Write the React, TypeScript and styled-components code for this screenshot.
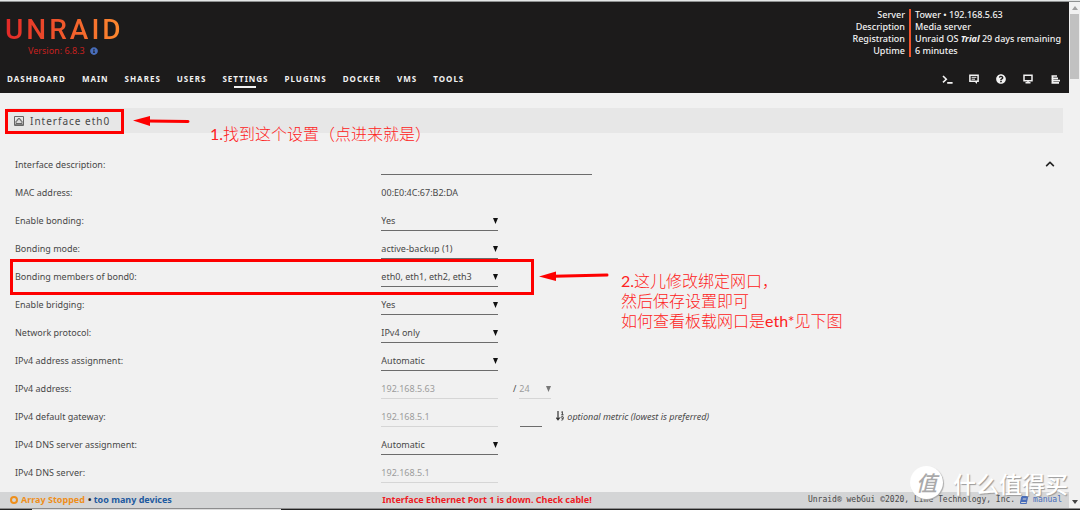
import React from 'react';
import styled, { createGlobalStyle, css } from 'styled-components';
import { FaChevronUp, FaInfoCircle, FaQuestionCircle, FaBook } from 'react-icons/fa';

const GlobalStyle = createGlobalStyle`
  * { box-sizing: border-box; }
  body {
    margin: 0;
    background: #f1f1f1;
    color: #484848;
    font-family: "Noto Sans", "Noto Sans CJK SC", sans-serif;
    font-size: 9px;
  }
  button, input, select { font: inherit; color: inherit; }
`;

const Screen = styled.div`
  position: relative;
  display: flex;
  flex-direction: column;
  height: 100vh;
  overflow: hidden;
  border-top: 1px solid #e4e6e6;
`;

const Viewport = styled.div`
  display: flex;
  flex: 1;
  min-height: 0;
  border-top: 1px solid #8f9191;
`;

const Page = styled.div`
  display: flex;
  flex: 1;
  flex-direction: column;
  min-width: 0;
`;

const Header = styled.header`
  display: flex;
  flex-direction: column;
  justify-content: space-between;
  height: 91px;
  padding: 7px 8px 4px 7px;
  background: #1c1b1b;
  color: #f2f2f2;
`;

const HeaderTop = styled.div`
  display: flex;
  justify-content: space-between;
`;

const Brand = styled.div`
  display: flex;
  flex-direction: column;
  padding-top: 7px;
`;

const Logo = styled.a`
  margin-left: -2px;
  font-family: Roboto, sans-serif;
  font-size: 28px;
  line-height: 28px;
  font-weight: 500;
  letter-spacing: 3px;
  text-decoration: none;
  color: transparent;
  background: linear-gradient(90deg, #e22828, #ff8c2f);
  background-clip: text;
  -webkit-background-clip: text;
`;

const Version = styled.div`
  display: flex;
  align-items: center;
  gap: 5px;
  margin-top: 1px;
  padding-left: 21px;
  line-height: 12px;
  color: #c4211f;
  svg { color: #486dba; }
`;

const ServerInfo = styled.dl`
  display: grid;
  grid-template-columns: auto auto;
  margin: 0;
  font-weight: 500;
  line-height: 12px;
  height: 48px;
`;

const InfoName = styled.dt`
  padding-right: 4px;
  text-align: right;
  border-right: 2px solid #f0522b;
`;

const InfoValue = styled.dd`
  margin: 0;
  padding-left: 4px;
`;

const NavBar = styled.div`
  display: flex;
  align-items: flex-start;
  justify-content: space-between;
  height: 16px;
`;

const Nav = styled.nav`
  display: flex;
  gap: 16px;
`;

const NavLink = styled.a<{ $active?: boolean }>`
  position: relative;
  font-size: 8px;
  line-height: 12px;
  font-weight: 700;
  letter-spacing: 1px;
  color: #f2f2f2;
  text-decoration: none;
  ${p => p.$active && css`
    &::after {
      content: "";
      position: absolute;
      left: calc(50% - 11px);
      bottom: -3px;
      width: 22px;
      height: 2px;
      background: #f2f2f2;
    }
  `}
`;

const Tools = styled.div`
  display: flex;
  gap: 15px;
`;

const IconButton = styled.button`
  display: flex;
  align-items: center;
  justify-content: center;
  width: 12px;
  height: 12px;
  padding: 0;
  border: 0;
  background: none;
`;

const Content = styled.main`
  flex: 1;
  min-height: 0;
  padding: 15px 6px 0 7px;
`;

const Title = styled.h1`
  display: flex;
  align-items: center;
  gap: 6px;
  height: 25px;
  margin: 0 0 17px;
  padding: 0 7px;
  background: #e7e7e7;
  font-size: 10px;
  font-weight: 400;
  letter-spacing: 1px;
`;

const Form = styled.form`
  padding: 0 7px 0 8px;
`;

const Row = styled.div`
  display: grid;
  grid-template-columns: 35% 1fr;
  align-items: center;
  height: 28px;
`;

const Field = styled.div`
  display: flex;
  align-items: center;
  padding-left: 2px;
`;

const controlStyle = css<{ $width: number }>`
  width: ${p => p.$width}px;
  height: 22px;
  padding: 2px 0 0;
  border: 0;
  border-bottom: 1px solid #6c6c6c;
  border-radius: 0;
  background: none;
  outline: 0;
  &:disabled {
    border-color: #d6d6d6;
    color: #9c9c9c;
    opacity: 1;
  }
`;

const TextBox = styled.input<{ $width: number }>`${controlStyle}`;

const SelectBox = styled.select<{ $width: number }>`
  ${controlStyle}
  appearance: none;
`;

const SelectWrap = styled.span<{ $muted?: boolean }>`
  position: relative;
  display: flex;
  > svg {
    position: absolute;
    right: 0;
    top: 9px;
    pointer-events: none;
    fill: ${p => (p.$muted ? '#777' : '#111')};
  }
`;

const Slash = styled.span`
  width: 21px;
  padding-right: 3px;
  text-align: right;
`;

const Metric = styled.span`
  display: flex;
  align-items: center;
  padding-left: 22px;
`;

const Hint = styled.em`
  display: flex;
  align-items: center;
  gap: 3px;
  padding-left: 14px;
`;

const CollapseButton = styled(IconButton)`
  margin-left: auto;
  color: #222;
`;

const Footer = styled.footer`
  display: grid;
  grid-template-columns: 35% 1fr auto;
  align-items: center;
  height: 16px;
  padding: 0 7px 0 10px;
  background: #d4d5d6;
  font-weight: 700;
  line-height: 16px;
`;

const Status = styled.div`
  display: flex;
  align-items: center;
  gap: 3px;
  color: #ee8f1c;
`;

const StatusNote = styled.span`
  color: #1d5aa0;
  &::before { content: "• "; color: #222; }
`;

const Alert = styled.div`
  padding-left: 4px;
  color: #ee1c25;
`;

const Copyright = styled.div`
  display: flex;
  align-items: center;
  gap: 5px;
  font-family: "DejaVu Sans Mono", monospace;
  font-size: 8px;
  font-weight: 400;
`;

const ManualLink = styled.a`
  display: flex;
  align-items: center;
  gap: 5px;
  color: #486dba;
  text-decoration: none;
  svg { transform: skewX(-12deg); }
`;

const ScrollTrack = styled.div`
  display: flex;
  flex-direction: column;
  align-items: center;
  justify-content: space-between;
  width: 11px;
  padding: 4px 1px;
  background: #f1f1f1;
`;

const ScrollTop = styled.div`
  display: flex;
  flex-direction: column;
  align-items: center;
  gap: 4px;
  width: 100%;
`;

const ScrollThumb = styled.div`
  width: 100%;
  height: 65px;
  background: #c1c1c1;
`;

const DesktopEdge = styled.div`
  height: 2px;
  border-top: 1px solid #8d8d8e;
  background: linear-gradient(90deg, #222 3%, #ddd 3%, #ddd 26%, #222 26%);
`;

const Mark = styled.div<{ $x: number; $y: number; $w: number; $h: number }>`
  position: absolute;
  left: ${p => p.$x}px;
  top: ${p => p.$y}px;
  width: ${p => p.$w}px;
  height: ${p => p.$h}px;
  border: 3px solid #fe0000;
  pointer-events: none;
`;

const Arrow = styled.svg<{ $x: number; $y: number }>`
  position: absolute;
  left: ${p => p.$x}px;
  top: ${p => p.$y}px;
  pointer-events: none;
`;

const Note = styled.div<{ $x: number; $y: number }>`
  position: absolute;
  left: ${p => p.$x}px;
  top: ${p => p.$y}px;
  font-family: Lato, "Noto Sans CJK SC", sans-serif;
  font-size: 16px;
  line-height: 20px;
  font-weight: 300;
  white-space: nowrap;
  color: #fe2222;
  pointer-events: none;
`;

const Latin = styled.span`
  font-weight: 400;
`;

const Watermark = styled.div`
  position: absolute;
  right: 12px;
  bottom: 11px;
  display: flex;
  align-items: center;
  gap: 10px;
  font-family: "Noto Sans CJK SC", sans-serif;
  font-size: 23px;
  line-height: 32px;
  font-weight: 500;
  color: #fff;
  text-shadow: 1px 1px 1px #999;
  pointer-events: none;
`;

const WatermarkBadge = styled.span`
  width: 33px;
  height: 33px;
  border-radius: 50%;
  background: #fff;
  box-shadow: 1px 1px 1px #aaa;
  font-size: 21px;
  font-style: italic;
  text-align: center;
  text-shadow: none;
  color: #a9a9aa;
`;

const Caret = () => (
  <svg width="5" height="6" viewBox="0 0 5 6" aria-hidden="true">
    <path d="M0 0H5L2.5 6Z" />
  </svg>
);

const TerminalIcon = () => (
  <svg width="11" height="9" viewBox="0 0 11 9" fill="none" stroke="currentColor" strokeWidth="1.6">
    <path d="M1 1L4.3 4.2L1 7.4M5.2 7.9H10.6" />
  </svg>
);

const FeedbackIcon = () => (
  <svg width="10" height="10" viewBox="0 0 10 10" fill="none" stroke="currentColor">
    <path strokeWidth="1.5" d="M.9 1.2H9.1V7.3H.9Z" />
    <path d="M2.6 3.3H7.4M2.6 5.2H6" />
    <path fill="currentColor" stroke="none" d="M5 7H8V10Z" />
  </svg>
);

const MonitorIcon = () => (
  <svg width="10" height="10" viewBox="0 0 10 10" fill="none" stroke="currentColor" strokeWidth="1.5">
    <path d="M1 1.2H9V6.8H1Z" />
    <path d="M2.5 8.8H7.5M5 6.6V9" />
  </svg>
);

const LogIcon = () => (
  <svg width="9" height="9" viewBox="0 0 9 9" fill="none" stroke="currentColor" strokeWidth="1.7">
    <path d="M.5 1H6M.5 3.3H7M.5 5.6H9M.5 7.9H8M1.5 .5V8.5" />
  </svg>
);

const PortIcon = () => (
  <svg width="10" height="10" viewBox="0 0 10 10" fill="none" stroke="#666">
    <path d="M.5 .5H9.5V9.5H.5Z" />
    <path d="M2 7.5V5H3.2V3.6H4.2V2.5H5.8V3.6H6.8V5H8V7.5Z" fill="#ddd" />
    <path d="M1 8.3H9" />
  </svg>
);

const SortIcon = () => (
  <svg width="8" height="10" viewBox="0 0 8 10" fill="none" stroke="#333">
    <path strokeWidth="1.2" d="M2 0V8M.3 6.7L2 8.8L3.7 6.7" />
    <path strokeWidth=".9" d="M5.3 1.2L6.4 .6V3.8M5.2 3.8H7.6M7.2 6.6A1 1 0 1 1 7.2 6.2V7.6Q7.2 9.2 5.4 9.2" />
  </svg>
);

const RingIcon = () => (
  <svg width="8" height="8" viewBox="0 0 8 8" fill="none" stroke="currentColor" strokeWidth="2">
    <circle cx="4" cy="4" r="3" />
  </svg>
);

const ScrollArrow = ({ down }: { down?: boolean }) => (
  <svg width="6" height="4" viewBox="0 0 6 4" fill={down ? '#444' : '#a0a0a0'}>
    <path d={down ? 'M0 0H6L3 4Z' : 'M0 4H6L3 0Z'} />
  </svg>
);

const navItems = ['DASHBOARD', 'MAIN', 'SHARES', 'USERS', 'SETTINGS', 'PLUGINS', 'DOCKER', 'VMS', 'TOOLS'];

const serverInfo: [string, React.ReactNode][] = [
  ['Server', 'Tower • 192.168.5.63'],
  ['Description', 'Media server'],
  ['Registration', <>Unraid OS <b><i>Trial</i></b> 29 days remaining</>],
  ['Uptime', '6 minutes'],
];

interface SelectProps {
  id: string;
  value: string;
  width?: number;
  disabled?: boolean;
  label?: string;
}

const Select = ({ id, value, width = 117, disabled, label }: SelectProps) => (
  <SelectWrap $muted={disabled}>
    <SelectBox id={id} $width={width} disabled={disabled} aria-label={label} defaultValue={value}>
      <option>{value}</option>
    </SelectBox>
    <Caret />
  </SelectWrap>
);

interface FormRowProps {
  id: string;
  label: string;
  children: React.ReactNode;
}

const FormRow = ({ id, label, children }: FormRowProps) => (
  <Row>
    <label htmlFor={id}>{label}</label>
    <Field>{children}</Field>
  </Row>
);

export default function App() {
  return (
    <>
      <GlobalStyle />
      <Screen>
        <Viewport>
          <Page>
            <Header>
              <HeaderTop>
                <Brand>
                  <Logo href="#">UNRAID</Logo>
                  <Version>Version: 6.8.3 <FaInfoCircle size={8} /></Version>
                </Brand>
                <ServerInfo>
                  {serverInfo.map(([name, value]) => (
                    <React.Fragment key={name}>
                      <InfoName>{name}</InfoName>
                      <InfoValue>{value}</InfoValue>
                    </React.Fragment>
                  ))}
                </ServerInfo>
              </HeaderTop>
              <NavBar>
                <Nav>
                  {navItems.map(item => (
                    <NavLink key={item} href="#" $active={item === 'SETTINGS'}>{item}</NavLink>
                  ))}
                </Nav>
                <Tools>
                  <IconButton aria-label="Terminal"><TerminalIcon /></IconButton>
                  <IconButton aria-label="Feedback"><FeedbackIcon /></IconButton>
                  <IconButton aria-label="Help"><FaQuestionCircle size={10} /></IconButton>
                  <IconButton aria-label="Info"><MonitorIcon /></IconButton>
                  <IconButton aria-label="Log"><LogIcon /></IconButton>
                </Tools>
              </NavBar>
            </Header>

            <Content>
              <Title><PortIcon />Interface eth0</Title>
              <Form>
                <FormRow id="description" label="Interface description:">
                  <TextBox id="description" $width={211} />
                  <CollapseButton type="button" aria-label="Collapse"><FaChevronUp size={10} /></CollapseButton>
                </FormRow>
                <FormRow id="mac" label="MAC address:">
                  <output id="mac">00:E0:4C:67:B2:DA</output>
                </FormRow>
                <FormRow id="bonding" label="Enable bonding:">
                  <Select id="bonding" value="Yes" />
                </FormRow>
                <FormRow id="mode" label="Bonding mode:">
                  <Select id="mode" value="active-backup (1)" />
                </FormRow>
                <FormRow id="members" label="Bonding members of bond0:">
                  <Select id="members" value="eth0, eth1, eth2, eth3" />
                </FormRow>
                <FormRow id="bridging" label="Enable bridging:">
                  <Select id="bridging" value="Yes" />
                </FormRow>
                <FormRow id="protocol" label="Network protocol:">
                  <Select id="protocol" value="IPv4 only" />
                </FormRow>
                <FormRow id="assignment" label="IPv4 address assignment:">
                  <Select id="assignment" value="Automatic" />
                </FormRow>
                <FormRow id="address" label="IPv4 address:">
                  <TextBox id="address" $width={117} defaultValue="192.168.5.63" disabled />
                  <Slash>/</Slash>
                  <Select id="mask" label="Netmask" value="24" width={32} disabled />
                </FormRow>
                <FormRow id="gateway" label="IPv4 default gateway:">
                  <TextBox id="gateway" $width={117} defaultValue="192.168.5.1" disabled />
                  <Metric>
                    <TextBox $width={22} aria-label="Metric" />
                    <Hint><SortIcon />optional metric (lowest is preferred)</Hint>
                  </Metric>
                </FormRow>
                <FormRow id="dnsAssignment" label="IPv4 DNS server assignment:">
                  <Select id="dnsAssignment" value="Automatic" />
                </FormRow>
                <FormRow id="dns" label="IPv4 DNS server:">
                  <TextBox id="dns" $width={117} defaultValue="192.168.5.1" disabled />
                </FormRow>
              </Form>
            </Content>

            <Footer>
              <Status>
                <RingIcon />Array Stopped <StatusNote>too many devices</StatusNote>
              </Status>
              <Alert>Interface Ethernet Port 1 is down. Check cable!</Alert>
              <Copyright>
                Unraid® webGui ©2020, Lime Technology, Inc.
                <ManualLink href="#"><FaBook size={8} />manual</ManualLink>
              </Copyright>
            </Footer>
          </Page>
          <ScrollTrack>
            <ScrollTop>
              <ScrollArrow />
              <ScrollThumb />
            </ScrollTop>
            <ScrollArrow down />
          </ScrollTrack>
        </Viewport>
        <DesktopEdge />

        <Mark $x={5} $y={108} $w={119} $h={25} />
        <Arrow $x={133} $y={114} width="57" height="12" viewBox="0 0 57 12">
          <path d="M15 6L55 6.5" stroke="#fe0000" strokeWidth="3" strokeLinecap="round" />
          <path d="M0 5.5L17 1V11Z" fill="#fe0000" />
        </Arrow>
        <Note $x={210} $y={123}><Latin>1.</Latin>找到这个设置（点进来就是）</Note>
        <Mark $x={10} $y={258} $w={524} $h={36} />
        <Arrow $x={539} $y={269} width="71" height="12" viewBox="0 0 71 12">
          <path d="M15 6.3L68 5" stroke="#fe0000" strokeWidth="3" strokeLinecap="round" />
          <path d="M0 6.5L17 1.5V11Z" fill="#fe0000" />
        </Arrow>
        <Note $x={621} $y={270}>
          <Latin>2.</Latin>这儿修改绑定网口，<br />然后保存设置即可<br />如何查看板载网口是<Latin>eth*</Latin>见下图
        </Note>
        <Watermark><WatermarkBadge>值</WatermarkBadge>什么值得买</Watermark>
      </Screen>
    </>
  );
}
